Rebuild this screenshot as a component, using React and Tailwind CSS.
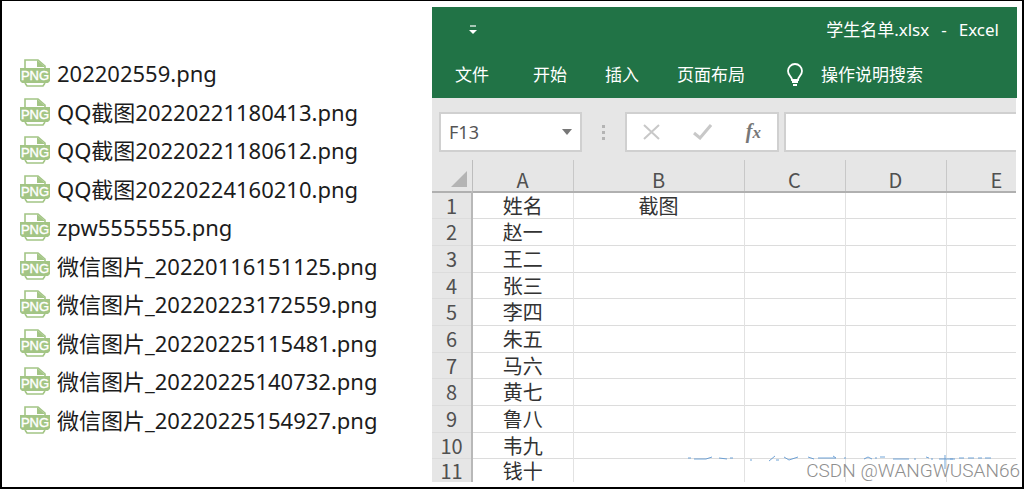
const FILES = [
  "202202559.png",
  "QQ截图20220221180413.png",
  "QQ截图20220221180612.png",
  "QQ截图20220224160210.png",
  "zpw5555555.png",
  "微信图片_20220116151125.png",
  "微信图片_20220223172559.png",
  "微信图片_20220225115481.png",
  "微信图片_20220225140732.png",
  "微信图片_20220225154927.png"
];

const COLUMNS = ["A", "B", "C", "D", "E"];

const ROWS = [
  ["姓名", "截图"],
  ["赵一"],
  ["王二"],
  ["张三"],
  ["李四"],
  ["朱五"],
  ["马六"],
  ["黄七"],
  ["鲁八"],
  ["韦九"],
  ["钱十"]
];

function PngIcon() {
  return (
    <svg width="30" height="28" viewBox="0 0 30 28" className="shrink-0" aria-hidden="true">
      <path d="M5 9V1h13l7 6v3" fill="none" stroke="#a3c585" strokeWidth="1.6" />
      <path d="M17 1v7h8z" fill="#a3c585" />
      <path d="M0 9h30v13l-2 2H2l-2-2z" fill="#a3c585" />
      <path d="M5 24l2 3h16l2-3" fill="none" stroke="#a3c585" strokeWidth="1.6" />
      <text x="15" y="21" textAnchor="middle" fontSize="13" fontWeight="400" fill="#fff" stroke="#fff" strokeWidth="0.4" fontFamily="Liberation Sans, sans-serif">PNG</text>
    </svg>
  );
}

function FileList() {
  return (
    <ul className="grid w-[430px] shrink-0 auto-rows-fr pt-[53px] pb-[48px] pl-[18px] text-[22px] text-[#1c1c1c]">
      {FILES.map((name) => (
        <li key={name} className="flex min-h-0 items-center gap-[7px] leading-[30px]">
          <PngIcon />
          <span className="whitespace-nowrap">{name}</span>
        </li>
      ))}
    </ul>
  );
}

function Ribbon() {
  return (
    <header className="mr-[5px] bg-[#217346] text-[17px] text-white">
      <div className="flex h-[46px] items-center justify-between pr-[18px] pl-[36px]">
        <button type="button" aria-label="自定义快速访问工具栏">
          <svg width="10" height="10" viewBox="0 0 10 10">
            <path d="M2 1h6" stroke="#fff" strokeWidth="1.2" />
            <path d="M1 5h8L5 9z" fill="#fff" />
          </svg>
        </button>
        <h1 className="flex gap-[12px]">
          <span>学生名单.xlsx</span>
          <span>-</span>
          <span>Excel</span>
        </h1>
      </div>
      <nav className="flex h-[45px] items-center gap-[38px] pb-[2px] pl-[23px]">
        <button type="button" className="mr-[6px]">文件</button>
        <button type="button">开始</button>
        <button type="button">插入</button>
        <button type="button">页面布局</button>
        <button type="button" className="flex items-center gap-[14px]">
          <svg width="24" height="24" viewBox="0 0 24 24" fill="none" stroke="#fff" strokeWidth="1.8">
            <path d="M9 17c0-4-4-4-4-9a7 7 0 0 1 14 0c0 5-4 5-4 9zM9 19h6M10 22h4" />
          </svg>
          操作说明搜索
        </button>
      </nav>
    </header>
  );
}

function FormulaBar() {
  return (
    <div className="mt-[14px] flex h-[40px] text-[18px] text-[#555]">
      <div className="ml-[7px] flex w-[143px] items-center border-2 border-[#d0d0d0] bg-white px-[8px]">
        <input aria-label="名称框" defaultValue="F13" className="w-full min-w-0 outline-none" />
        <button type="button" aria-label="名称列表">
          <svg width="10" height="6" viewBox="0 0 10 6">
            <path d="M0 0h10L5 6z" fill="#777" />
          </svg>
        </button>
      </div>
      <div className="flex w-[43px] items-center justify-center">
        <svg width="3" height="15" viewBox="0 0 3 15" fill="#b4b4b4">
          <path d="M0 0h3v3H0zM0 6h3v3H0zM0 12h3v3H0z" />
        </svg>
      </div>
      <div className="flex w-[154px] items-center justify-between border-2 border-[#d0d0d0] bg-white px-[16px]">
        <button type="button" aria-label="取消">
          <svg width="17" height="16" viewBox="0 0 17 16" fill="none" stroke="#c8c8c8" strokeWidth="2">
            <path d="M1 1l15 14M16 1L1 15" />
          </svg>
        </button>
        <button type="button" aria-label="输入">
          <svg width="19" height="16" viewBox="0 0 19 16" fill="none" stroke="#c8c8c8" strokeWidth="3">
            <path d="M1 9l6 5L18 1" />
          </svg>
        </button>
        <button type="button" aria-label="插入函数" className="pb-[2px] font-['Liberation_Serif',serif] text-[20px] leading-none font-bold text-[#777] italic">
          f<span className="text-[17px]">x</span>
        </button>
      </div>
      <input aria-label="编辑栏" className="ml-[5px] min-w-0 flex-1 border-2 border-r-0 border-[#d0d0d0] bg-white px-2 outline-none" />
    </div>
  );
}

function Sheet() {
  return (
    <div className="mt-[8px] min-h-0 flex-1 overflow-hidden bg-white">
      <table className="w-[615px] table-fixed border-collapse font-['Noto_Sans_CJK_SC',sans-serif] text-[20px] leading-[23px] text-[#333]">
        <colgroup>
          <col className="w-[40px]" />
          <col className="w-[101px]" />
          <col className="w-[171px]" />
          <col className="w-[101px]" />
          <col className="w-[101px]" />
          <col className="w-[101px]" />
        </colgroup>
        <thead>
          <tr className="h-[32px] border-b-2 border-[#b0b0b0] bg-[#e6e6e6] text-[#505050]">
            <th className="border-r border-[#bdbdbd]">
              <svg width="16" height="16" viewBox="0 0 16 16" className="mt-[6px] ml-[19px]">
                <path d="M16 0v16H0z" fill="#b4b4b4" />
              </svg>
            </th>
            {COLUMNS.map((column) => (
              <th key={column} scope="col" className="border-r border-[#c8c8c8] pt-[7px] font-normal">{column}</th>
            ))}
          </tr>
        </thead>
        <tbody>
          {ROWS.map((cells, index) => (
            <tr key={cells[0]} className="h-[27px] border-b border-[#dcdcdc] nth-[3n+1]:h-[26px] last:h-[23px] last:border-b-0">
              <th scope="row" className="border-r-2 border-[#b8b8b8] bg-[#e6e6e6] font-normal text-[#505050]">{index + 1}</th>
              {COLUMNS.map((column, i) => (
                <td key={column} className="border-r border-[#e2e2e2] text-center">{cells[i]}</td>
              ))}
            </tr>
          ))}
        </tbody>
      </table>
    </div>
  );
}

function Watermark() {
  return (
    <div className="absolute right-0 bottom-0 pr-[2px] pb-[4px] text-right">
      <svg width="332" height="14" viewBox="0 0 332 14" fill="none" stroke="#4f8fd0" strokeWidth="1" className="-mb-[10px] opacity-80">
        <path d="M0 3h3M6 4h12l6-2M31 3l8 1M42 3h3M62 5h2M81 6l6-5M88 5h3M96 2l5 3 9-3M120 2l6 2M130 3h18l-3-2M156 3h2M176 4l4-2 4 2M187 3h2M192 2h5M205 4h16M226 4h2M238 2l3 1M243 4h2M251 4h16M257 0v14M262 4h3M271 3h5M280 3h6M290 3h4M297 3h6" />
      </svg>
      <p className="font-['Roboto',sans-serif] text-[19px] leading-[24px] font-light text-[#8f8f8f]">CSDN @WANGWUSAN66</p>
    </div>
  );
}

export default function App() {
  return (
    <main className="relative flex h-screen overflow-hidden border-2 border-t border-black bg-white font-['Noto_Sans','Noto_Sans_CJK_SC',sans-serif]">
      <FileList />
      <section className="flex min-w-0 flex-1 flex-col pt-[6px] pb-[4px]">
        <Ribbon />
        <div className="mr-[6px] flex min-h-0 flex-1 flex-col bg-[#e6e6e6]">
          <FormulaBar />
          <Sheet />
        </div>
      </section>
      <Watermark />
    </main>
  );
}
